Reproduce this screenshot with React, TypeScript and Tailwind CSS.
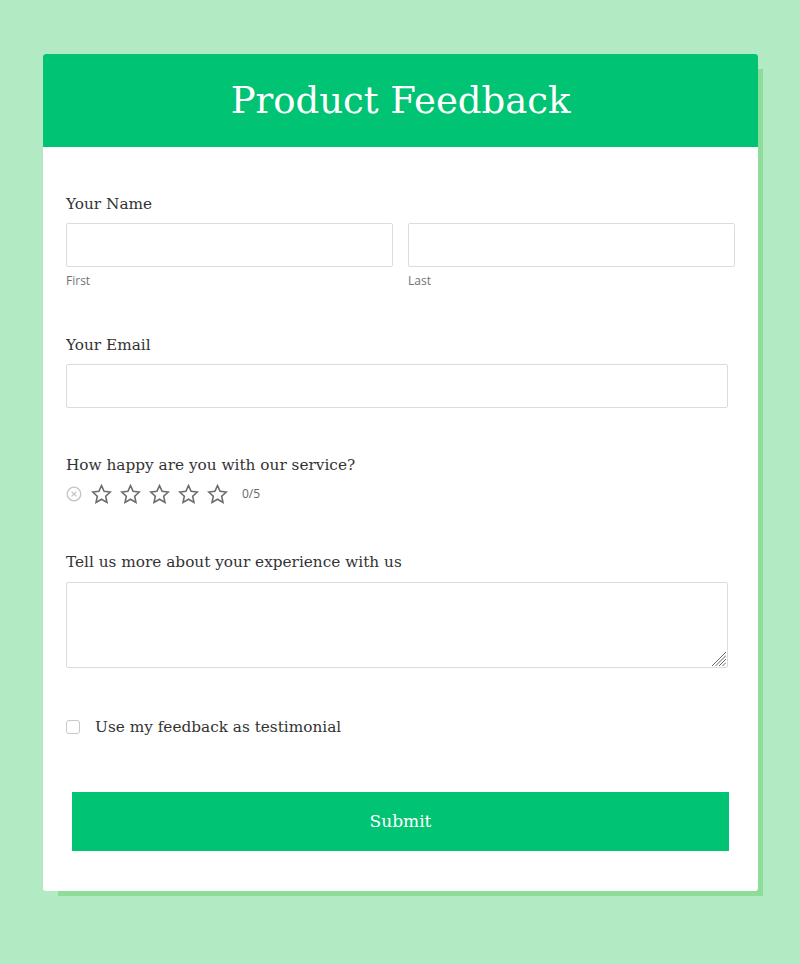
const serif = "font-['DejaVu_Serif','Liberation_Serif',serif]"

const Star = () => (
    <svg width="21" height="20" viewBox="0 0 24 23" fill="none" stroke="#6b6b6b" strokeWidth="1.8" strokeLinejoin="miter">
        <path d="M12 1.8l3 6.6 7.1.8-5.3 4.8 1.5 7.1L12 17.5l-6.3 3.6 1.5-7.1L1.9 9.2 9 8.4z" />
    </svg>
)

const ClearIcon = () => (
    <svg width="16" height="16" viewBox="0 0 16 16" fill="none" stroke="#c4c4c4" strokeWidth="1.3">
        <circle cx="8" cy="8" r="6.8" />
        <path d="M5.6 5.6l4.8 4.8M10.4 5.6l-4.8 4.8" />
    </svg>
)

const Label = ({ children }: { children: React.ReactNode }) => (
    <label className={`block text-[15.3px] leading-6 text-[#333] ${serif}`}>{children}</label>
)

const Input = ({ className = "" }: { className?: string }) => (
    <input type="text" className={`block h-[44px] rounded-[2px] border border-[#dcdcdc] bg-white px-3 outline-none ${className}`} />
)

export default function App() {
    return (
        <div className="min-h-[964px] bg-[#b2eac3] pt-[54px]">
            <div className="ml-[43px] w-[715px] overflow-hidden rounded-[3px] bg-white shadow-[10px_10px_0_-5px_#8edc99]">
                <div className="flex h-[93px] items-center justify-center bg-[#00c373]">
                    <h1 className={`text-[37px] text-white ${serif}`}>Product Feedback</h1>
                </div>

                <div className="px-[23px] pt-[45px] pb-[40px]">
                    <Label>Your Name</Label>
                    <div className="mt-[7px] flex gap-[15px]">
                        <div className="flex-1">
                            <Input className="w-full" />
                            <p className="mt-[5px] font-['Open_Sans',sans-serif] text-[12px] leading-[18px] text-[#737373]">First</p>
                        </div>
                        <div className="flex-1">
                            <Input className="w-full" />
                            <p className="mt-[5px] font-['Open_Sans',sans-serif] text-[12px] leading-[18px] text-[#737373]">Last</p>
                        </div>
                    </div>

                    <div className="mt-[43px]">
                        <Label>Your Email</Label>
                        <Input className="mt-[7px] w-[662px]" />
                    </div>

                    <div className="mt-[45px]">
                        <Label>How happy are you with our service?</Label>
                        <div className="mt-[7px] flex h-[20px] items-center">
                            <ClearIcon />
                            <div className="ml-[9px] flex gap-[8px]">
                                <Star />
                                <Star />
                                <Star />
                                <Star />
                                <Star />
                            </div>
                            <span className="ml-[14px] font-['Open_Sans',sans-serif] text-[12px] text-[#666]">0/5</span>
                        </div>
                    </div>

                    <div className="mt-[46px]">
                        <Label>Tell us more about your experience with us</Label>
                        <div className="relative mt-[8px] w-[662px]">
                            <textarea className="block h-[86px] w-full resize-none rounded-[2px] border border-[#dcdcdc] outline-none" />
                            <svg className="absolute right-[2px] bottom-[2px]" width="15" height="15" viewBox="0 0 15 15" stroke="#666" strokeWidth="1">
                                <path d="M1 15L15 1M4.5 15L15 4.5M8 15L15 8M11.5 15L15 11.5" />
                            </svg>
                        </div>
                    </div>

                    <div className="mt-[49px] flex h-[20px] items-center">
                        <span className="block size-[14px] rounded-[3px] border border-[#c8c8c8] bg-white" />
                        <span className={`ml-[15px] text-[15.3px] text-[#333] ${serif}`}>Use my feedback as testimonial</span>
                    </div>

                    <button className={`mx-[6px] mt-[55px] block h-[59px] w-[657px] bg-[#00c373] text-[17px] text-white ${serif}`}>
                        Submit
                    </button>
                </div>
            </div>
        </div>
    )
}
